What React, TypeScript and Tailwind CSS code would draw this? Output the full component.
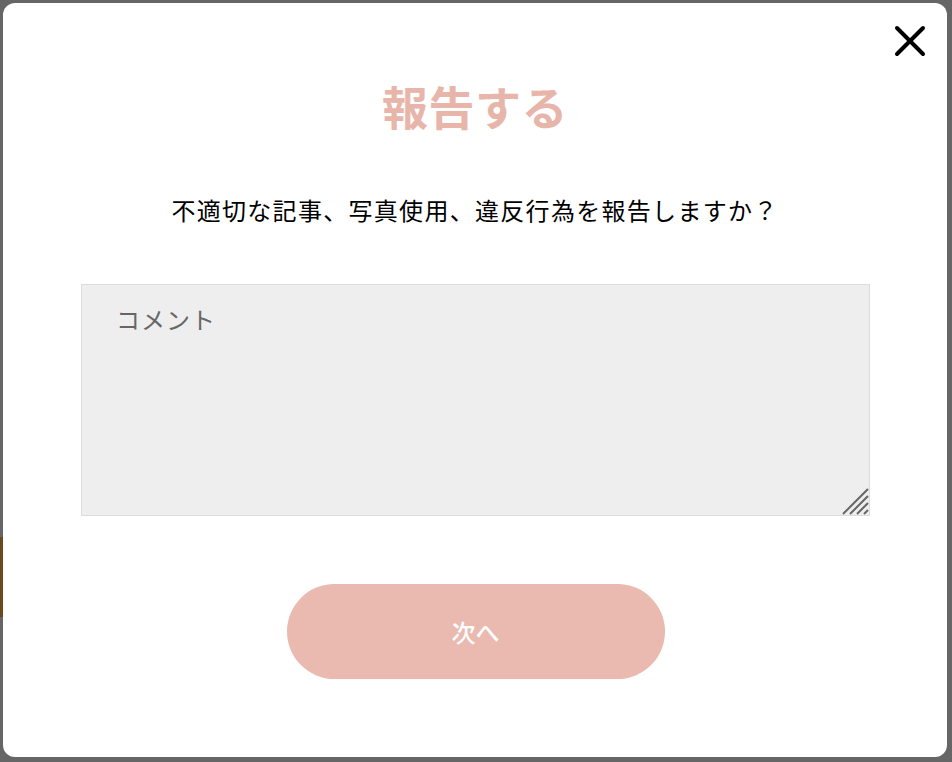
import { useState } from "react";

const JP = "font-['Noto_Sans_CJK_JP','Noto_Sans',sans-serif]";

const CloseIcon = () => (
  <svg width="32" height="32" viewBox="0 0 32 32" fill="none">
    <path
      d="M3 3 L29 29 M29 3 L3 29"
      stroke="#000"
      strokeWidth="4"
      strokeLinecap="round"
    />
  </svg>
);

const ResizeGrip = () => (
  <svg width="28" height="28" viewBox="0 0 28 28" fill="none">
    <path
      d="M2 27 L27 2 M9 27 L27 9 M16 27 L27 16 M23 27 L27 23"
      stroke="#666"
      strokeWidth="2"
    />
  </svg>
);

export default function App() {
  const [comment, setComment] = useState("");

  return (
    <div className={`flex h-[762px] w-[952px] bg-[#666666] ${JP}`}>
      {/* page behind the overlay */}
      <div className="flex w-[3px] flex-col">
        <div className="h-[537px]" />
        <div className="h-[80px] bg-[#6a4a1c]" />
      </div>
      <div className="relative mt-[3px] flex h-[754px] w-[944px] flex-col items-center rounded-[12px] bg-white">
        <button className="absolute right-[21px] top-[22px]">
          <CloseIcon />
        </button>
        <h2 className="mt-[79px] text-[46px] font-bold leading-none tracking-[0.5px] text-[#e8b5aa]">
          報告する
        </h2>
        <p className="mt-[70px] text-[24px] leading-none tracking-[1.3px] text-black">
          不適切な記事、写真使用、違反行為を報告しますか？
        </p>
        <div className="relative ml-[1px] mt-[62px] h-[232px] w-[789px]">
          <textarea
            value={comment}
            onChange={(e) => setComment(e.target.value)}
            placeholder="コメント"
            className="h-full w-full resize-none border border-[#dcdcdc] bg-[#eeeeee] px-[34px] pt-[18px] text-[24px] leading-[32px] tracking-[1px] text-[#333] outline-none placeholder:text-[#666]"
          />
          <div className="pointer-events-none absolute bottom-[1px] right-[1px]">
            <ResizeGrip />
          </div>
        </div>
        <button className="ml-[1px] mt-[68px] flex h-[95px] w-[378px] items-center justify-center rounded-full bg-[#eab9b0] text-[24px] font-medium text-white">
          次へ
        </button>
      </div>
    </div>
  );
}
